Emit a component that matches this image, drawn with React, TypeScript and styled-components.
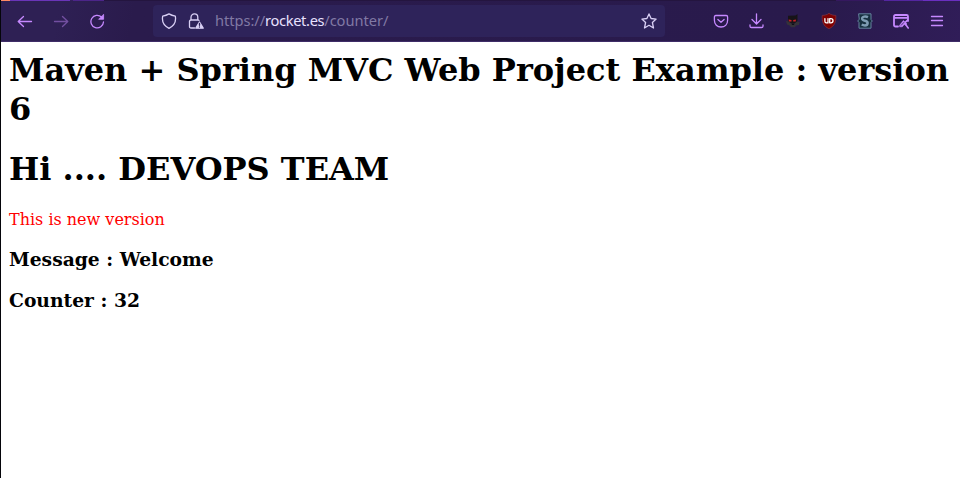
import React from "react";
import styled, { createGlobalStyle } from "styled-components";

const Global = createGlobalStyle`
  * { box-sizing: border-box; }
  body { margin: 0; background: #fff; overflow: hidden; }
`;

const Window = styled.div`
  height: 478px;
  display: flex;
  flex-direction: column;
  border-left: 1px solid #05050a;
  background: #fff;
`;

const TabEdge = styled.div`
  height: 1px;
  flex: none;
  background: linear-gradient(90deg, #ff8a65 0 9px, #6a35b8 9px 69px, #35205f 69px 72px, #4c2589 72px 103px, #24153f 103px 835px, #35185f 835px 883px, #5426a0 883px 922px, #6a2fc0 922px);
`;

const Toolbar = styled.div`
  height: 41px;
  flex: none;
  display: flex;
  align-items: center;
  padding: 0 5px 0 6px;
  background: linear-gradient(100deg, #2e2054 0 6%, #2a1b4c 14%, #291a4c 85%, #301d58 100%);
  border-bottom: 1px solid #3f2d68;
`;

const IconButton = styled.span<{ $dim?: boolean }>`
  width: 36px;
  height: 36px;
  flex: none;
  display: flex;
  align-items: center;
  justify-content: center;
  color: #c689ff;
  opacity: ${(p) => (p.$dim ? 0.45 : 1)};
`;

const AddressBar = styled.div`
  width: 512px;
  height: 32px;
  margin-left: 38px;
  margin-right: 38px;
  flex: none;
  display: flex;
  align-items: center;
  padding: 0 8px;
  border-radius: 4px;
  background: #2e235a;
  color: #d9d0f5;
`;

const Identity = styled.span`
  display: flex;
  gap: 11px;
  margin-right: 11px;
`;

const Url = styled.span`
  flex: 1;
  padding-bottom: 2px;
  font: 14.67px/20px "Noto Sans", sans-serif;
  color: #8179a4;
  letter-spacing: -0.05px;
  white-space: pre;
`;

const Host = styled.span`
  color: #e9e2ff;
  letter-spacing: -0.35px;
`;

const Glyph = styled.svg`
  display: block;
  flex: none;
  fill: none;
  stroke: currentColor;
  stroke-width: 1.3;
  stroke-linecap: round;
  stroke-linejoin: round;
`;

const Page = styled.main`
  flex: 1;
  padding: 9px 0 0 8px;
  font-family: "DejaVu Serif", serif;
  color: #000;
`;

const Title = styled.h1`
  margin: 0 0 21px;
  font-size: 32px;
  line-height: 39px;
`;

const Notice = styled.p`
  margin: 0 0 19px;
  font-size: 16px;
  line-height: 19px;
  color: #f00;
`;

const Field = styled.h3`
  margin: 0 0 18px;
  font-size: 18.72px;
  line-height: 23px;
`;

const Icon = ({ children }: { children: React.ReactNode }) => (
  <Glyph width="16" height="16" viewBox="0 0 16 16">{children}</Glyph>
);

const Back = () => <Icon><path d="M14.5 8.5H1.5M6.5 3.5L1.2 8.5L6.5 13.5" /></Icon>;
const Forward = () => <Icon><path d="M1.5 8.5H14.5M9.5 3.5L14.8 8.5L9.5 13.5" /></Icon>;
const Reload = () => (
  <Icon>
    <path d="M12.5 4A6.3 6.3 0 1 0 14.5 9" />
    <path d="M14.6 1.7V6.3H10Z" fill="currentColor" strokeWidth=".8" />
  </Icon>
);
const Shield = () => (
  <Icon><path d="M8 .9C10 2 12 2.7 14.3 3.2C15.2 8 13.2 12.8 8 15.3C2.8 12.8.8 8 1.7 3.2C4 2.7 6 2 8 .9Z" /></Icon>
);
const Lock = () => (
  <Icon>
    <path d="M6.5 15H3Q1.5 15 1.5 13.5V8.5Q1.5 7 3 7H9.5Q10.8 7 11 7.5M3 7V4.3A3.4 3.4 0 0 1 9.8 4.3V7" />
    <path d="M11.5 9L15.2 15.2H7.8Z" fill="currentColor" />
    <path d="M11.5 10.5V12.3M11.5 14V14.1" stroke="#2e235a" />
  </Icon>
);
const Star = () => (
  <Icon><path d="M8 .9L10.1 5.5L15.1 6.1L11.4 9.5L12.5 15L8 12.3L3.5 15L4.6 9.5L.9 6.1L5.9 5.5Z" /></Icon>
);
const Pocket = () => (
  <Icon>
    <path d="M2.8 2.5H13.2Q14.6 2.5 14.6 4V7.3C14.6 11.5 11.7 14 8 14S1.4 11.5 1.4 7.3V4Q1.4 2.5 2.8 2.5Z" />
    <path d="M4.9 6.5L8 9.2L11.1 6.5" />
  </Icon>
);
const Download = () => (
  <Icon><path d="M7.5 .8V10.8M3 6.5L7.5 11L12 6.5M1 11.8V13.3Q1 14.5 2.5 14.5H12.5Q14 14.5 14 13.3V11.8" /></Icon>
);
const Mask = () => (
  <Icon>
    <g stroke="none">
      <path d="M3 2.8L10.5 2.6L12.5 1V7.5L11.5 10.5H4.2L3 7Z" fill="#171418" />
      <path d="M1 8L3.5 8.5L6.5 10.5H9.5L12 8.5L14.6 9L14 12L11 12.5L10 14.2H6L4.5 12.5L2 11.5Z" fill="#35323a" />
      <path d="M3.6 6.4L6.5 7V8.4H4ZM11 6.4L8.2 7V8.4H10.7Z" fill="#c91f25" />
      <path d="M6.5 10.5H9.5L9 12H7Z" fill="#121014" />
    </g>
  </Icon>
);
const UBlock = () => (
  <Icon>
    <path d="M8 .4C10 1.8 12.3 2.4 14.8 2.4C15.2 8.5 13.8 13 8 15.7C2.2 13 .8 8.5 1.2 2.4C3.7 2.4 6 1.8 8 .4Z" fill="#800000" stroke="#87343f" strokeWidth=".7" />
    <path d="M3.9 5.6V8.2Q3.9 9.9 5.4 9.9H7V5.6M8.7 5.6H9.9Q12 5.6 12 7.7T9.9 9.8H8.7Z" stroke="#fff" strokeWidth="1.3" />
  </Icon>
);
const Stylus = () => (
  <Icon>
    <path d="M2 .8H14V6.5L15.3 8L14 9.5V15.2H2V9.5L.7 8L2 6.5Z" fill="#17303f" stroke="#6683a0" strokeWidth="1" />
    <path d="M11 4.1Q9 3.2 7.2 3.6Q5 4.1 5.2 5.9Q5.4 7.2 8 7.8Q10.8 8.5 10.6 10.3Q10.3 12.4 8 12.4Q6.2 12.4 4.7 11.5" stroke="#7e9cb3" strokeWidth="2.5" strokeLinecap="butt" />
  </Icon>
);
const Customize = () => (
  <Icon>
    <path d="M5 13.5H2.5Q1 13.5 1 12V3.5Q1 2 2.5 2H13.5Q15 2 15 3.5V8M1 4.8H15" strokeWidth="1.8" />
    <path d="M6.5 12.5L10.4 7.5L14 11L12.5 12.2L11.2 11.4L9.3 13.8H6.8Z" fill="currentColor" strokeWidth=".6" />
    <path d="M14.6 7.2L12.5 9.2M13 12L15.2 15" strokeWidth="1.6" />
    <path d="M8.3 12.2L10.8 9.5" stroke="#2b1b4e" strokeWidth=".8" />
  </Icon>
);
const Menu = () => <Icon><path d="M2.5 3.5H13.5M2.5 7.5H13.5M2.5 12.5H13.5" /></Icon>;

export default function App() {
  return (
    <Window>
      <Global />
      <TabEdge />
      <Toolbar>
        <IconButton><Back /></IconButton>
        <IconButton $dim><Forward /></IconButton>
        <IconButton><Reload /></IconButton>
        <AddressBar>
          <Identity><Shield /><Lock /></Identity>
          <Url>https://<Host>rocket.es</Host>/counter/</Url>
          <Star />
        </AddressBar>
        <IconButton><Pocket /></IconButton>
        <IconButton><Download /></IconButton>
        <IconButton><Mask /></IconButton>
        <IconButton><UBlock /></IconButton>
        <IconButton><Stylus /></IconButton>
        <IconButton><Customize /></IconButton>
        <IconButton><Menu /></IconButton>
      </Toolbar>
      <Page>
        <Title>Maven + Spring MVC Web Project Example : version 6</Title>
        <Title>Hi .... DEVOPS TEAM</Title>
        <Notice>This is new version</Notice>
        <Field>Message : Welcome</Field>
        <Field>Counter : 32</Field>
      </Page>
    </Window>
  );
}
